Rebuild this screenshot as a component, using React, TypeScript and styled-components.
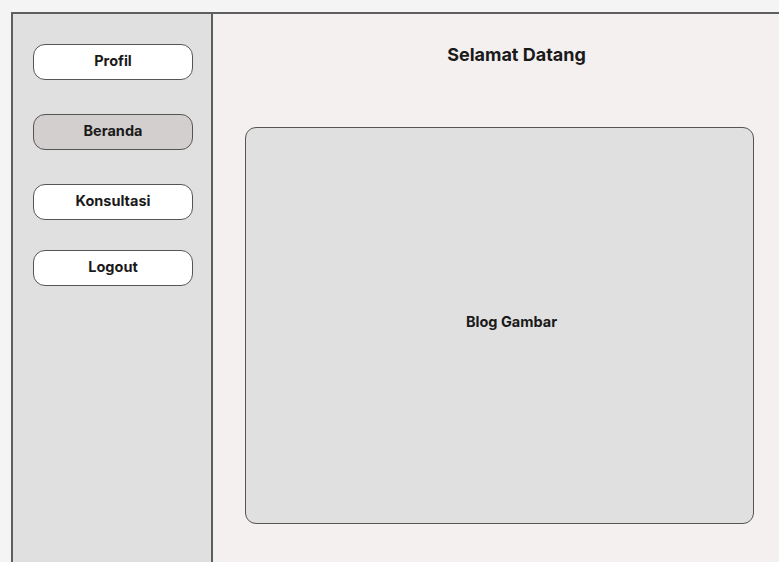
import React from "react";
import styled, { createGlobalStyle } from "styled-components";

const Global = createGlobalStyle`
  html, body { margin: 0; padding: 0; background: #f4f4f4; }
  body { font-family: Inter, "Noto Sans", Arial, sans-serif; color: #1a1a1a; }
  #root { min-height: 100vh; }
`;

const Page = styled.div`
  padding: 12px 0 0 11px;
  height: 562px;
  box-sizing: border-box;
  overflow: hidden;
`;

const Frame = styled.div`
  display: flex;
  height: 550px;
  border-top: 2px solid #5e5e5e;
  border-left: 2px solid #5e5e5e;
  box-sizing: border-box;
`;

const Sidebar = styled.nav`
  width: 200px;
  flex-shrink: 0;
  background: #e0e0e0;
  border-right: 2px solid #5e5e5e;
  box-sizing: border-box;
  display: flex;
  flex-direction: column;
  align-items: flex-start;
  padding: 30px 0 0 20px;
`;

const NavButton = styled.button<{ $active?: boolean; $mt?: number }>`
  width: 160px;
  height: 36px;
  margin-top: ${(p) => p.$mt ?? 0}px;
  border: 1.6px solid #555;
  border-radius: 12px;
  background: ${(p) => (p.$active ? "#d4cfcf" : "#ffffff")};
  font-family: Inter, "Noto Sans", Arial, sans-serif;
  font-weight: 700;
  font-size: 14.5px;
  color: #1a1a1a;
  padding: 0 0 3px;
  box-sizing: border-box;
  cursor: pointer;
`;

const Main = styled.main`
  flex: 1;
  background: #f5f0f0;
  display: flex;
  flex-direction: column;
  padding: 30px 25px 0 32px;
  box-sizing: border-box;
`;

const Title = styled.h1`
  margin: 0;
  font-size: 18px;
  font-weight: 700;
  text-align: center;
  padding-left: 34px;
  line-height: 22px;
`;

const Card = styled.section`
  margin-top: 61px;
  width: 509px;
  height: 397px;
  background: #e0e0e0;
  border: 1.6px solid #555;
  border-radius: 11px;
  box-sizing: border-box;
  display: flex;
  align-items: center;
  justify-content: center;
  padding-bottom: 8px;
`;

const CardLabel = styled.span`
  font-size: 14.5px;
  font-weight: 700;
  margin-left: 24px;
`;

export default function App() {
  return (
    <>
      <Global />
      <Page>
        <Frame>
          <Sidebar>
            <NavButton>Profil</NavButton>
            <NavButton $active $mt={34}>Beranda</NavButton>
            <NavButton $mt={34}>Konsultasi</NavButton>
            <NavButton $mt={30}>Logout</NavButton>
          </Sidebar>
          <Main>
            <Title>Selamat Datang</Title>
            <Card>
              <CardLabel>Blog Gambar</CardLabel>
            </Card>
          </Main>
        </Frame>
      </Page>
    </>
  );
}
